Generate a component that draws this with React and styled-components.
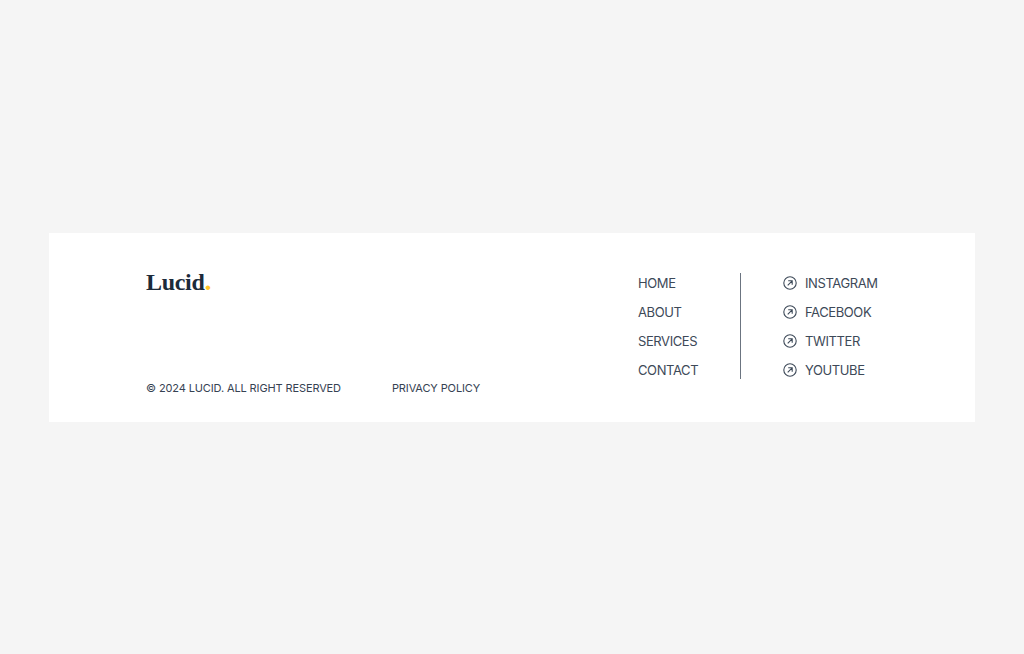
import React from 'react';
import styled, { createGlobalStyle } from 'styled-components';

const GlobalStyle = createGlobalStyle`
  html, body {
    margin: 0;
    padding: 0;
    background: #f5f5f5;
  }
`;

const Page = styled.div`
  box-sizing: border-box;
  width: 1024px;
  height: 654px;
  padding: 233px 49px 0;
`;

const Card = styled.footer`
  box-sizing: border-box;
  width: 926px;
  height: 189px;
  background: #fff;
  padding: 39px 97px 0;
  display: flex;
  justify-content: space-between;
  font-family: "Inter", "Liberation Sans", sans-serif;
`;

const Left = styled.div`
  display: flex;
  flex-direction: column;
  height: 123px;
  justify-content: space-between;
`;

const Logo = styled.div`
  margin-top: -1px;
  font-family: "Liberation Serif", serif;
  font-weight: 700;
  font-size: 24px;
  line-height: 20px;
  letter-spacing: -0.3px;
  color: #1c2b3a;

  span {
    color: #ffc629;
    font-size: 28px;
    line-height: 20px;
  }
`;

const Legal = styled.div`
  display: flex;
  gap: 51px;
  font-size: 11px;
  line-height: 14px;
  letter-spacing: -0.12px;
  color: #364252;
`;

const Right = styled.nav`
  display: flex;
  width: 241px;
  height: 106px;
  margin-top: 1px;
`;

const Pages = styled.ul`
  box-sizing: border-box;
  list-style: none;
  margin: 0;
  padding: 0 0 0 1px;
  width: 104px;
  border-right: 1px solid #6b7480;
  display: flex;
  flex-direction: column;
  gap: 9px;
`;

const Socials = styled(Pages)`
  width: 137px;
  border-right: 0;
  padding-left: 42px;
`;

const Item = styled.li`
  font-size: 13px;
  line-height: 20px;
  letter-spacing: -0.4px;
  color: #3d4958;
  display: flex;
  align-items: center;
  gap: 8px;
  white-space: nowrap;

  svg {
    flex-shrink: 0;
  }
`;

const ArrowCircle = () => (
  <svg width="14" height="14" viewBox="0 0 14 14" fill="none" stroke="#3d4958" strokeWidth="1.1">
    <circle cx="7" cy="7" r="6.2" />
    <path d="M4.7 9.3 9.2 4.8M5.2 4.8h4v4" />
  </svg>
);

const pages = ['HOME', 'ABOUT', 'SERVICES', 'CONTACT'];
const socials = ['INSTAGRAM', 'FACEBOOK', 'TWITTER', 'YOUTUBE'];

const App = () => (
  <Page>
    <GlobalStyle />
    <Card>
      <Left>
        <Logo>Lucid<span>.</span></Logo>
        <Legal>
          <span>© 2024 LUCID. ALL RIGHT RESERVED</span>
          <span>PRIVACY POLICY</span>
        </Legal>
      </Left>
      <Right>
        <Pages>
          {pages.map(p => <Item key={p}>{p}</Item>)}
        </Pages>
        <Socials>
          {socials.map(s => (
            <Item key={s}>
              <ArrowCircle />
              {s}
            </Item>
          ))}
        </Socials>
      </Right>
    </Card>
  </Page>
);

export default App;
